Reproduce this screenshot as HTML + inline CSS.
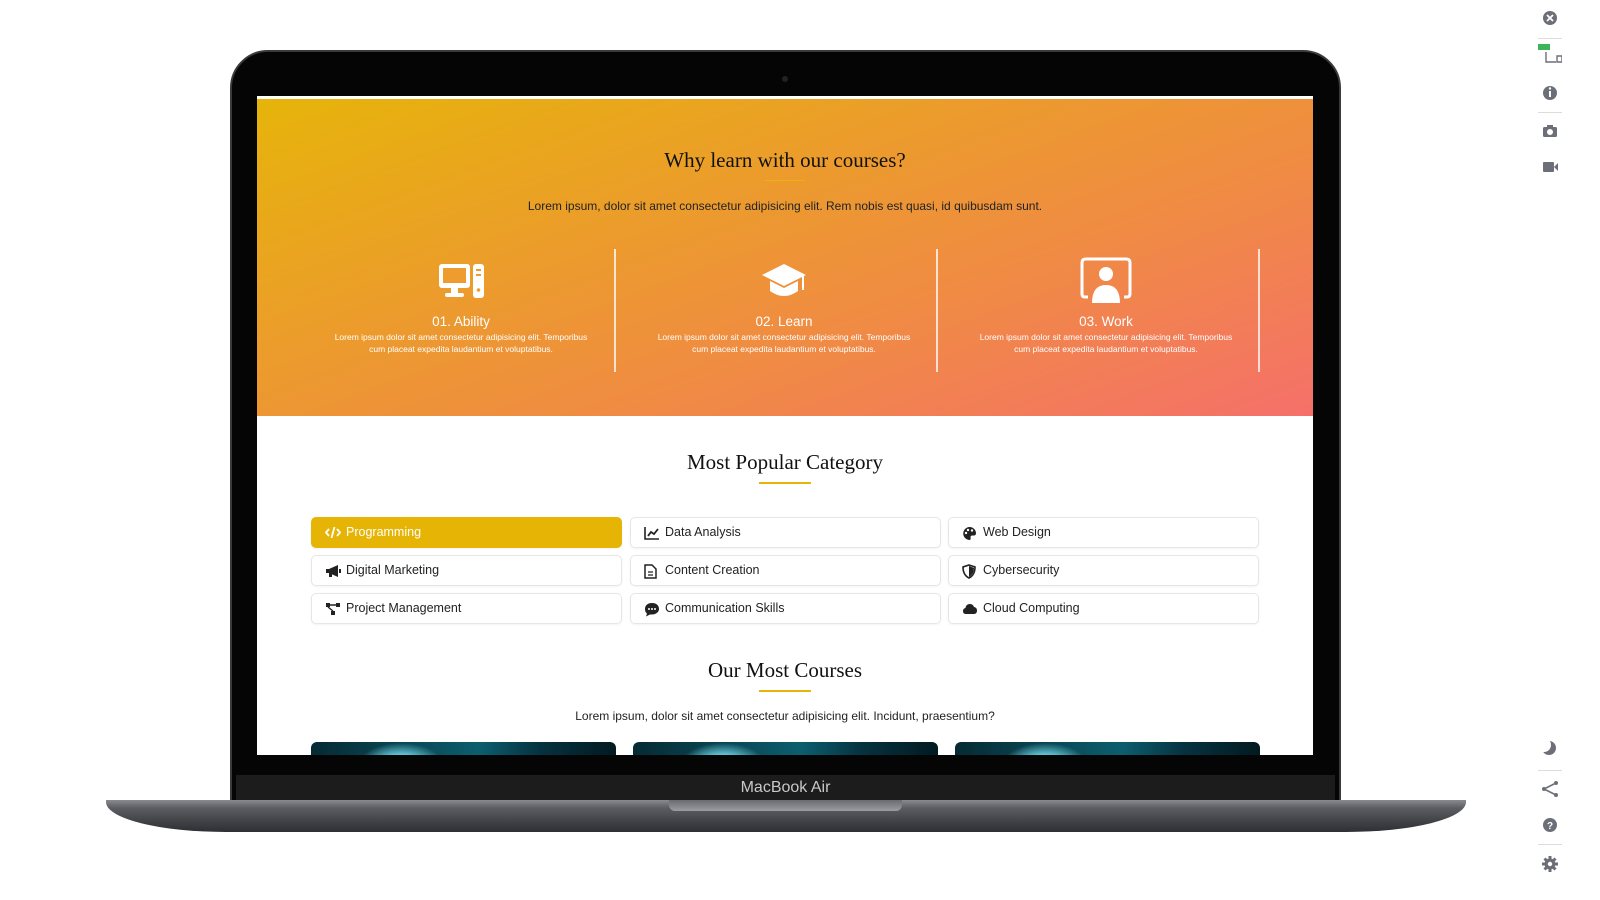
<!DOCTYPE html>
<html><head><meta charset="utf-8"><style>
*{margin:0;padding:0;box-sizing:border-box}
body{width:1600px;height:900px;background:#fff;position:relative;overflow:hidden;font-family:"Liberation Sans",sans-serif}
.abs{position:absolute}
.bezel{left:230px;top:50px;width:1111px;height:760px;background:#050505;border-radius:38px 38px 0 0;border:2px solid #3a3a3a}
.screen{left:257px;top:96px;width:1056px;height:659px;background:#fff;overflow:hidden}
.hero{position:absolute;left:0;top:0;width:1056px;height:320px;background:linear-gradient(160deg,#e6b40a 0%,#ec9a2e 40%,#f08a45 65%,#f5706a 100%);border-top:3px solid #fff}
.serif{font-family:"Liberation Serif",serif;color:#111}
.c{text-align:center}
.col{position:absolute;top:150px;width:300px;text-align:center;color:#fff}
.col h4{font-size:13.5px;font-weight:normal;margin-top:8px}
.col p{font-size:8.5px;line-height:12px;margin-top:2px}
.div{position:absolute;top:150px;width:2px;height:123px;background:rgba(255,255,255,.75)}
.cat{position:absolute;width:311px;height:31px;border:1px solid #e6e6e6;border-radius:5px;font-size:12.5px;color:#222;padding-left:34px;line-height:29px;box-shadow:0 1px 2px rgba(0,0,0,.05)}
.cat svg{position:absolute;left:13px;top:8px}
.card{position:absolute;top:646px;width:305px;height:20px;border-radius:6px 6px 0 0;background:radial-gradient(ellipse 60px 30px at 90px 22px,#e0f2f5 0%,#5ab8c8 35%,transparent 70%),linear-gradient(90deg,#062a33 0%,#0a4654 30%,#0c5e6e 55%,#063240 75%,#021a20 100%)}
</style></head><body>
<div class="abs bezel"></div>
<div class="abs" style="left:782px;top:76px;width:6px;height:6px;border-radius:50%;background:#222"></div>
<div class="abs screen">
 <div class="hero">
  <div class="abs serif c" style="left:0;width:1056px;top:49px;font-size:21px">Why learn with our courses?</div>
  <div class="abs" style="left:508px;top:81px;width:40px;height:1px;background:#e6b40a"></div>
  <div class="abs c" style="left:0;width:1056px;top:100px;font-size:12px;color:#222">Lorem ipsum, dolor sit amet consectetur adipisicing elit. Rem nobis est quasi, id quibusdam sunt.</div>
  <div class="col" style="left:54px">
   <svg width="52" height="40" viewBox="0 0 52 40" style="margin-top:12px"><rect x="4" y="3" width="31" height="24" rx="3" fill="#fff"/><rect x="8" y="7" width="23" height="15" fill="#ee9c30"/><rect x="16" y="27" width="7" height="6" fill="#fff"/><rect x="10" y="32" width="19" height="4" rx="2" fill="#fff"/><rect x="38" y="3" width="11" height="34" rx="3" fill="#fff"/><rect x="41" y="8" width="5" height="2" fill="#ee9c30"/><rect x="41" y="13" width="5" height="2" fill="#ee9c30"/><circle cx="43.5" cy="29" r="1.8" fill="#ee9c30"/></svg>
   <h4>01. Ability</h4><p>Lorem ipsum dolor sit amet consectetur adipisicing elit. Temporibus<br>cum placeat expedita laudantium et voluptatibus.</p>
  </div>
  <div class="div" style="left:357px"></div>
  <div class="col" style="left:377px">
   <svg width="52" height="40" viewBox="0 0 52 40" style="margin-top:12px"><path d="M26 3 L48 14 L26 25 L4 14 Z" fill="#fff"/><path d="M12 20 L12 30 Q26 40 40 30 L40 20 L26 27 Z" fill="#fff"/><rect x="44" y="15" width="2" height="14" fill="#fff"/></svg>
   <h4>02. Learn</h4><p>Lorem ipsum dolor sit amet consectetur adipisicing elit. Temporibus<br>cum placeat expedita laudantium et voluptatibus.</p>
  </div>
  <div class="div" style="left:679px"></div>
  <div class="col" style="left:699px">
   <svg width="52" height="48" viewBox="0 0 52 48" style="margin-top:8px"><path d="M8 40 L5 40 Q2 40 2 37 L2 6 Q2 2 6 2 L46 2 Q50 2 50 6 L50 37 Q50 40 47 40 L44 40" stroke="#fff" stroke-width="3" fill="none"/><circle cx="26" cy="17" r="7" fill="#fff"/><path d="M12 46 Q12 28 26 28 Q40 28 40 46 Z" fill="#fff"/></svg>
   <h4 style="margin-top:4px">03. Work</h4><p>Lorem ipsum dolor sit amet consectetur adipisicing elit. Temporibus<br>cum placeat expedita laudantium et voluptatibus.</p>
  </div>
  <div class="div" style="left:1001px"></div>
 </div>
 <div class="abs serif c" style="left:0;width:1056px;top:354px;font-size:21px">Most Popular Category</div>
 <div class="abs" style="left:502px;top:386px;width:52px;height:2px;background:#e6b40a"></div>

 <div class="cat" style="left:54px;top:421px;background:#e6b405;border-color:#e6b405;color:#fff"><svg width="16" height="13" viewBox="0 0 16 13"><path d="M4 3 L1 6.5 L4 10 M12 3 L15 6.5 L12 10 M9.5 1 L6.5 12" stroke="#fff" stroke-width="1.8" fill="none"/></svg>Programming</div>
 <div class="cat" style="left:373px;top:421px"><svg width="16" height="14" viewBox="0 0 16 14"><path d="M1 1 V13 H15" stroke="#222" stroke-width="1.6" fill="none"/><path d="M4 10 L7 6 L10 8 L14 3" stroke="#222" stroke-width="1.8" fill="none"/></svg>Data Analysis</div>
 <div class="cat" style="left:691px;top:421px"><svg width="15" height="15" viewBox="0 0 15 15"><path d="M7.5 1 A6.5 6.5 0 1 0 8 14 Q9 13 8.5 11 Q8.5 9.5 10.5 9.5 L12 9.5 Q14 9.5 14 7 A6.5 6.5 0 0 0 7.5 1 Z" fill="#222"/><circle cx="4" cy="7" r="1.2" fill="#fff"/><circle cx="6" cy="4" r="1.2" fill="#fff"/><circle cx="10" cy="4.5" r="1.2" fill="#fff"/></svg>Web Design</div>

 <div class="cat" style="left:54px;top:459px"><svg width="16" height="14" viewBox="0 0 16 14"><path d="M1 5 H4 L13 1 V13 L4 9 H1 Z" fill="#222"/><rect x="4" y="9" width="3" height="4" fill="#222"/><rect x="14" y="5" width="2" height="4" fill="#222"/></svg>Digital Marketing</div>
 <div class="cat" style="left:373px;top:459px"><svg width="13" height="15" viewBox="0 0 13 15"><path d="M1 1 H8 L12 5 V14 H1 Z" stroke="#222" stroke-width="1.5" fill="none"/><path d="M4 8 H9 M4 11 H9" stroke="#222" stroke-width="1.3"/></svg>Content Creation</div>
 <div class="cat" style="left:691px;top:459px"><svg width="14" height="15" viewBox="0 0 14 15"><path d="M7 1 L13 3 Q13 11 7 14 Q1 11 1 3 Z" stroke="#222" stroke-width="1.6" fill="none"/><path d="M7 2 L12 4 Q12 10 7 13 Z" fill="#222"/></svg>Cybersecurity</div>

 <div class="cat" style="left:54px;top:497px"><svg width="16" height="14" viewBox="0 0 16 14"><rect x="1" y="1" width="4" height="4" fill="#222"/><rect x="11" y="1" width="4" height="4" fill="#222"/><rect x="6" y="9" width="4" height="4" fill="#222"/><path d="M5 3 H11 M3 5 L8 9" stroke="#222" stroke-width="1.4"/></svg>Project Management</div>
 <div class="cat" style="left:373px;top:497px"><svg width="16" height="15" viewBox="0 0 16 15"><path d="M8 1 C13 1 15 4 15 7 C15 10 12 12.5 8 12.5 L6 12.5 L2 14.5 L3 11.5 C1.5 10.5 1 9 1 7 C1 4 3 1 8 1 Z" fill="#222"/><circle cx="5" cy="7" r="1" fill="#fff"/><circle cx="8" cy="7" r="1" fill="#fff"/><circle cx="11" cy="7" r="1" fill="#fff"/></svg>Communication Skills</div>
 <div class="cat" style="left:691px;top:497px"><svg width="16" height="12" viewBox="0 0 16 12" style="top:9px"><path d="M4 11 Q1 11 1 8 Q1 5.5 3.5 5 Q4 1 8 1 Q11 1 12 4 Q15 4.5 15 7.5 Q15 11 12 11 Z" fill="#222"/></svg>Cloud Computing</div>

 <div class="abs serif c" style="left:0;width:1056px;top:562px;font-size:21px">Our Most Courses</div>
 <div class="abs" style="left:502px;top:594px;width:52px;height:2px;background:#e6b40a"></div>
 <div class="abs c" style="left:0;width:1056px;top:613px;font-size:12px;color:#222">Lorem ipsum, dolor sit amet consectetur adipisicing elit. Incidunt, praesentium?</div>
 <div class="card" style="left:54px"></div>
 <div class="card" style="left:376px"></div>
 <div class="card" style="left:698px"></div>
</div>
<div class="abs" style="left:236px;top:775px;width:1099px;height:26px;background:#1c1c1c"></div>
<div class="abs c" style="left:236px;width:1099px;top:779px;font-size:16px;color:#c8c8c8">MacBook Air</div>
<div class="abs" style="left:106px;top:800px;width:1360px;height:32px;background:linear-gradient(#8a8b8f 0%,#5c5d62 25%,#45464b 60%,#2e2f33 100%);border-radius:0 0 120px 120px / 0 0 30px 30px"></div>
<div class="abs" style="left:669px;top:800px;width:233px;height:11px;background:linear-gradient(#6a6b70,#9b9ca0);border-radius:0 0 6px 6px"></div>

<!-- right toolbar -->
<svg class="abs" style="left:1538px;top:8px" width="24" height="870" viewBox="0 0 24 870">
<g fill="#6c6f78">
<circle cx="12" cy="10" r="7"/><path d="M9 7 L15 13 M15 7 L9 13" stroke="#fff" stroke-width="1.8"/>
<rect x="0" y="30" width="24" height="1" fill="#ddd"/>
<rect x="-2" y="36" width="14" height="6" fill="#3bb55a"/>
<path d="M8 44 V54 H18 M19 48 H24 V54 H19 Z" stroke="#6c6f78" stroke-width="1.4" fill="none"/>
<circle cx="12" cy="85" r="7"/><rect x="11" y="83" width="2" height="6" fill="#fff"/><circle cx="12" cy="80.5" r="1.2" fill="#fff"/>
<rect x="0" y="104" width="24" height="1" fill="#ddd"/>
<rect x="5" y="119" width="14" height="10" rx="1.5"/><rect x="9" y="117" width="6" height="3"/><circle cx="12" cy="124" r="3" fill="#fff"/>
<rect x="5" y="154" width="11" height="10" rx="1"/><path d="M16 159 L20 155 V163 Z"/>
<circle cx="11" cy="740" r="7"/><circle cx="6" cy="737" r="7" fill="#fff"/>
<rect x="0" y="762" width="24" height="1" fill="#ddd"/>
<path d="M18 775 L6 781 L18 787" stroke="#6c6f78" stroke-width="1.6" fill="none"/><circle cx="18" cy="775" r="2"/><circle cx="6" cy="781" r="2"/><circle cx="18" cy="787" r="2"/>
<circle cx="12" cy="817" r="7"/><text x="12" y="821" font-size="10" font-weight="bold" fill="#fff" text-anchor="middle" font-family="Liberation Sans">?</text>
<rect x="0" y="836" width="24" height="1" fill="#ddd"/>
<circle cx="12" cy="856" r="5.5"/><path d="M12 848 V864 M4 856 H20 M6.5 850.5 L17.5 861.5 M17.5 850.5 L6.5 861.5" stroke="#6c6f78" stroke-width="3"/><circle cx="12" cy="856" r="2.2" fill="#fff"/>
</g></svg>
</body></html>
